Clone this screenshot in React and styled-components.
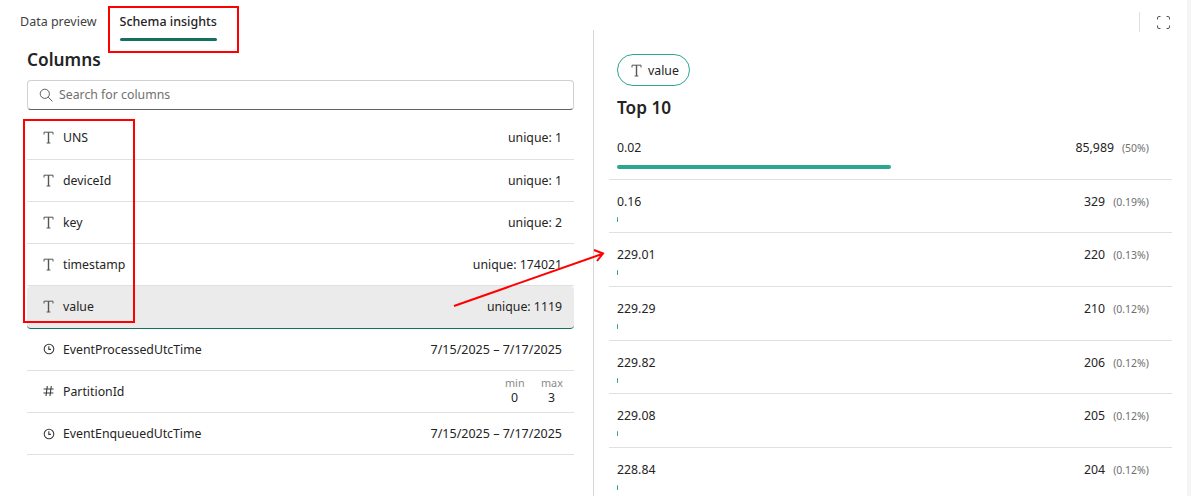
import React from "react";
import styled, { createGlobalStyle } from "styled-components";

const Global = createGlobalStyle`
  html, body { margin: 0; padding: 0; background: #fff; }
  body { font-family: "Noto Sans", "Open Sans", Arial, sans-serif; color: #242424; overflow: hidden; }
  * { box-sizing: border-box; }
`;

const Page = styled.div`
  position: relative;
  width: 1191px;
  height: 496px;
  overflow: hidden;
  background: #fff;
  border-right: 4px solid #f5f5f5;
`;
const TabBar = styled.div`
  display: flex;
  align-items: flex-start;
  height: 30px;
  padding: 0 17px 0 20px;
`;
const Tab = styled.div`
  position: relative;
  font-size: 12.5px;
  line-height: 17px;
  padding-top: 13px;
  margin-right: 23px;
  font-weight: ${(p) => (p.$active ? 500 : 400)};
  color: ${(p) => (p.$active ? "#242424" : "#424242")};
  white-space: nowrap;
  ${(p) =>
    p.$active &&
    `&::after { content: ""; position: absolute; left: 0; right: 0; top: 38px; height: 3px; border-radius: 2px; background: #15705e; }`}
`;
const TabTools = styled.div`
  margin-left: auto;
  display: flex;
  align-items: center;
  height: 20px;
  margin-top: 12px;
  width: 31px;
  border-left: 1px solid #e0e0e0;
  justify-content: flex-end;
`;
const Split = styled.div`
  display: flex;
  height: 466px;
`;
const LeftPane = styled.div`
  width: 594px;
  padding: 0 19px 0 27px;
  border-right: 1px solid #d6d6d6;
`;
const PaneTitle = styled.h2`
  margin: 0;
  font-size: 17.3px;
  line-height: 24px;
  padding-top: 18px;
  font-weight: 600;
  color: #242424;
`;
const Search = styled.div`
  margin-top: 8px;
  height: 30px;
  display: flex;
  align-items: center;
  gap: 6px;
  padding: 0 0 1px 11px;
  border: 1px solid #d1d1d1;
  border-bottom-color: #616161;
  border-radius: 4px;
  font-size: 12.3px;
  color: #707070;
`;
const Rows = styled.div`
  margin-top: 7.3px;
`;
const ColumnRow = styled.div`
  display: flex;
  align-items: center;
  height: 42.25px;
  padding: 0 12px 0 16px;
  font-size: 12.3px;
  color: #242424;
  border-bottom: 1px solid ${(p) => (p.$selected ? "#15705e" : "#e0e0e0")};
  background: ${(p) => (p.$selected ? "#ebebeb" : "transparent")};
  border-radius: ${(p) => (p.$selected ? "4px" : "0")};
`;
const IconSlot = styled.span`
  width: 20px;
  display: inline-flex;
  align-items: center;
`;
const RowEnd = styled.span`
  margin-left: auto;
  white-space: nowrap;
  font-size: ${(p) => (p.$date ? "12.5px" : "12.3px")};
`;
const MinMax = styled.div`
  margin-left: auto;
  display: grid;
  grid-template-columns: 19px 21px;
  column-gap: 17px;
  text-align: center;
  font-size: 12.3px;
  line-height: 17px;
`;
const MinMaxLabel = styled.span`
  font-size: 10.8px;
  line-height: 13px;
  color: #8a8a8a;
`;
const RightPane = styled.div`
  flex: 1;
  padding: 0 15px 0 15px;
  min-width: 0;
`;
const Chip = styled.div`
  display: inline-flex;
  align-items: center;
  gap: 6px;
  height: 32px;
  margin: 24px 0 0 8px;
  padding: 0 10px 0 13px;
  border: 1px solid #2aa78f;
  border-radius: 16px;
  font-size: 12.3px;
`;
const TopTitle = styled.h2`
  margin: 0 0 0 8px;
  font-size: 17.2px;
  line-height: 24px;
  padding-top: 10px;
  font-weight: 600;
`;
const Stats = styled.div`
  margin-top: 6.3px;
`;
const StatRow = styled.div`
  height: 53.6px;
  padding: 13px 23px 0 8px;
  border-bottom: 1px solid #e0e0e0;
`;
const StatTop = styled.div`
  display: flex;
  align-items: center;
  font-size: 12.3px;
  line-height: 18px;
`;
const Count = styled.span`
  margin-left: auto;
`;
const Percent = styled.span`
  margin-left: 8px;
  font-size: 10.5px;
  color: #707070;
`;
const Track = styled.div`
  margin-top: ${(p) => (p.$wide ? "8px" : "6px")};
  height: 4px;
`;
const Bar = styled.div`
  height: ${(p) => (p.$wide ? "4px" : "5px")};
  background: #2aa78f;
  border-radius: 2px;
`;
const Highlight = styled.div`
  position: absolute;
  border: 2px solid #f00;
  pointer-events: none;
`;
const Arrow = styled.svg`
  position: absolute;
  left: 0;
  top: 0;
  pointer-events: none;
`;

const TIcon = () => (
  <svg width="11" height="13" viewBox="0 0 11 13" fill="none" stroke="#555" strokeWidth="1">
    <path d="M1 3.5V1.2h9v2.3M3.6 12h3.8" />
    <path d="M5.5 1.2V12" strokeWidth="1.4" />
  </svg>
);
const ClockIcon = () => (
  <svg width="12" height="12" viewBox="0 0 12 12" fill="none" stroke="#3d3d3d" strokeWidth="1.1">
    <circle cx="6" cy="6" r="4.8" />
    <path d="M5.8 3.2V6.4H8" />
  </svg>
);
const HashIcon = () => (
  <svg width="11" height="12" viewBox="0 0 11 12" fill="none" stroke="#3d3d3d" strokeWidth="1.1">
    <path d="M4.3 1 3 11M8.3 1 7 11M.6 4h10M.4 8h10" />
  </svg>
);
const SearchIcon = () => (
  <svg width="14" height="14" viewBox="0 0 14 14" fill="none" stroke="#616161" strokeWidth="1">
    <circle cx="5.8" cy="5.8" r="4.6" />
    <path d="m9.2 9.2 4.2 4.2" />
  </svg>
);
const FullIcon = () => (
  <svg width="13" height="13" viewBox="0 0 13 13" fill="none" stroke="#555" strokeWidth="1">
    <path d="M.5 3.5V2A1.5 1.5 0 0 1 2 .5h1.5M9.5.5H11A1.5 1.5 0 0 1 12.500 2v1.500M12.500 9.500V11a1.500 1.500 0 0 1-1.500 1.500H9.500M3.500 12.500H2A1.500 1.500 0 0 1 .5 11V9.500" />
  </svg>
);

const columns = [
  { name: "UNS", icon: <TIcon />, end: "unique: 1" },
  { name: "deviceId", icon: <TIcon />, end: "unique: 1" },
  { name: "key", icon: <TIcon />, end: "unique: 2" },
  { name: "timestamp", icon: <TIcon />, end: "unique: 174021" },
  { name: "value", icon: <TIcon />, end: "unique: 1119", selected: true },
  { name: "EventProcessedUtcTime", icon: <ClockIcon />, end: "7/15/2025 – 7/17/2025", date: true },
  { name: "PartitionId", icon: <HashIcon />, minmax: true },
  { name: "EventEnqueuedUtcTime", icon: <ClockIcon />, end: "7/15/2025 – 7/17/2025", date: true },
];
const stats = [
  { v: "0.02", c: "85,989", p: "(50%)", w: 274 },
  { v: "0.16", c: "329", p: "(0.19%)", w: 1 },
  { v: "229.01", c: "220", p: "(0.13%)", w: 1 },
  { v: "229.29", c: "210", p: "(0.12%)", w: 1 },
  { v: "229.82", c: "206", p: "(0.12%)", w: 1 },
  { v: "229.08", c: "205", p: "(0.12%)", w: 1 },
  { v: "228.84", c: "204", p: "(0.12%)", w: 1 },
];

export default function App() {
  return (
    <Page>
      <Global />
      <TabBar>
        <Tab>Data preview</Tab>
        <Tab $active>Schema insights</Tab>
        <TabTools>
          <FullIcon />
        </TabTools>
      </TabBar>
      <Split>
        <LeftPane>
          <PaneTitle>Columns</PaneTitle>
          <Search>
            <SearchIcon />
            Search for columns
          </Search>
          <Rows>
            {columns.map((c) => (
              <ColumnRow key={c.name} $selected={c.selected}>
                <IconSlot>{c.icon}</IconSlot>
                {c.name}
                {c.minmax ? (
                  <MinMax>
                    <MinMaxLabel>min</MinMaxLabel>
                    <MinMaxLabel>max</MinMaxLabel>
                    <span>0</span>
                    <span>3</span>
                  </MinMax>
                ) : (
                  <RowEnd $date={c.date}>{c.end}</RowEnd>
                )}
              </ColumnRow>
            ))}
          </Rows>
        </LeftPane>
        <RightPane>
          <Chip>
            <TIcon />
            value
          </Chip>
          <TopTitle>Top 10</TopTitle>
          <Stats>
            {stats.map((s, i) => (
              <StatRow key={s.v}>
                <StatTop>
                  {s.v}
                  <Count>{s.c}</Count>
                  <Percent>{s.p}</Percent>
                </StatTop>
                <Track $wide={i === 0}>
                  <Bar $wide={i === 0} style={{ width: s.w }} />
                </Track>
              </StatRow>
            ))}
          </Stats>
        </RightPane>
      </Split>
      <Highlight style={{ left: 108, top: 6, width: 131, height: 47 }} />
      <Highlight style={{ left: 23, top: 119, width: 112, height: 204 }} />
      <Arrow width="1191" height="496" viewBox="0 0 1191 496" fill="none" stroke="#f00" strokeWidth="2">
        <path d="M454 306 602 254M594 250 603 253.500 597 261" />
      </Arrow>
    </Page>
  );
}
